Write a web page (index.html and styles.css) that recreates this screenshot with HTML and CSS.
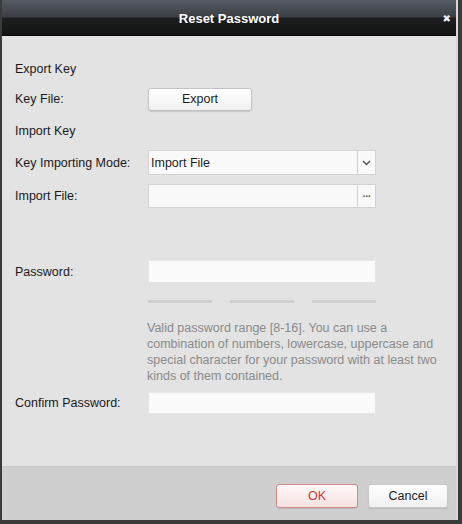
FILE: index.html
```html
<!DOCTYPE html>
<html>
<head>
<meta charset="utf-8">
<link rel="stylesheet" href="styles.css">
</head>
<body>
<div class="frame">
  <div class="dialog">
    <div class="titlebar">
      <span class="title">Reset Password</span>
      <span class="close">&#x2716;</span>
    </div>
    <div class="content">
      <div class="row r-export-key"><span class="label">Export Key</span></div>
      <div class="row r-key-file">
        <span class="label">Key File:</span>
        <button class="btn export">Export</button>
      </div>
      <div class="row r-import-key"><span class="label">Import Key</span></div>
      <div class="row r-mode">
        <span class="label">Key Importing Mode:</span>
        <div class="field select">
          <span class="value">Import File</span>
          <span class="side">
            <svg width="9" height="6" viewBox="0 0 9 6"><path d="M1 1 L4.5 4.5 L8 1" fill="none" stroke="#555" stroke-width="1.5"/></svg>
          </span>
        </div>
      </div>
      <div class="row r-file">
        <span class="label">Import File:</span>
        <div class="field file">
          <span class="value"></span>
          <span class="side dots">&middot;&middot;&middot;</span>
        </div>
      </div>
      <div class="row r-password">
        <span class="label">Password:</span>
        <div class="field input"></div>
      </div>
      <div class="row r-bars">
        <span class="label"></span>
        <div class="bars"><span class="bar"></span><span class="bar"></span><span class="bar"></span></div>
      </div>
      <div class="row r-help">
        <span class="label"></span>
        <p class="help">Valid password range [8-16]. You can use a combination of numbers, lowercase, uppercase and special character for your password with at least two kinds of them contained.</p>
      </div>
      <div class="row r-confirm">
        <span class="label">Confirm Password:</span>
        <div class="field input"></div>
      </div>
    </div>
    <div class="footer">
      <button class="btn ok">OK</button>
      <button class="btn cancel">Cancel</button>
    </div>
  </div>
</div>
</body>
</html>
```
FILE: styles.css
```css
* { box-sizing: border-box; }
html, body { margin: 0; padding: 0; }
body {
  width: 462px;
  height: 524px;
  font-family: "Liberation Sans", Arial, sans-serif;
  font-size: 12.5px;
  color: #222;
  background: #fff;
}
.frame {
  width: 462px;
  height: 524px;
  background: #3a3a3a;
  padding: 0 4px 4px 2px;
}
.dialog {
  width: 456px;
  height: 520px;
  display: flex;
  flex-direction: column;
  border-right: 2px solid #d6d6d6;
  background: #e3e3e3;
}
.titlebar {
  height: 36px;
  flex: none;
  display: flex;
  align-items: center;
  justify-content: center;
  position: relative;
  background: linear-gradient(#565b63 0%, #3b3f45 48%, #1d1e20 52%, #141414 100%);
  border-bottom: 1px solid #0d0d0d;
}
.title {
  color: #fff;
  font-weight: bold;
  font-size: 13px;
  margin-top: 1px;
}
.close {
  position: absolute;
  right: 5px;
  top: 13px;
  color: #eee;
  font-size: 10px;
  font-family: "DejaVu Sans", sans-serif;
}
.content {
  flex: 1;
  padding: 21px 0 0 13px;
  display: flex;
  flex-direction: column;
}
.row {
  display: flex;
  align-items: center;
}
.label {
  width: 133px;
  flex: none;
  color: #1a1a1a;
}
.r-export-key { height: 24px; }
.r-key-file { height: 24px; margin-top: 6px; }
.r-import-key { height: 24px; margin-top: 8px; }
.r-mode { height: 25px; margin-top: 7px; }
.r-file { height: 24px; margin-top: 9px; }
.r-password { height: 23px; margin-top: 52px; }
.r-bars { height: 3px; margin-top: 17px; }
.r-help { margin-top: 17px; align-items: flex-start; }
.r-confirm { height: 22px; margin-top: 8px; }

.btn {
  font-family: "Liberation Sans", Arial, sans-serif;
  font-size: 12.5px;
  border-radius: 3px;
  padding: 0;
  cursor: default;
}
.export {
  width: 104px;
  height: 23px;
  border: 1px solid #c2c2c2;
  background: linear-gradient(#ffffff, #f1f1f1);
  color: #1e1e1e;
  box-shadow: 0 1px 1px rgba(0,0,0,0.12);
}
.field {
  width: 228px;
  height: 100%;
  background: #f9f9f9;
  border: 1px solid #d3d3d3;
  display: flex;
  align-items: stretch;
}
.field .value {
  flex: 1;
  display: flex;
  align-items: center;
  padding-left: 2px;
  color: #1e1e1e;
}
.field .side {
  width: 18px;
  border-left: 1px solid #cfcfcf;
  display: flex;
  align-items: center;
  justify-content: center;
}
.dots {
  color: #666;
  font-size: 11px;
  letter-spacing: -1px;
  font-weight: bold;
}
.input {
  border-color: #e6e6e6;
  background: #fafafa;
}
.bars {
  width: 228px;
  display: flex;
  justify-content: space-between;
}
.bar {
  width: 64px;
  height: 3px;
  background: #cfcfcf;
}
.help {
  margin: 0;
  width: 305px;
  color: #8a8a8a;
  line-height: 16px;
  margin-left: -1px;
}
.footer {
  height: 54px;
  flex: none;
  background: #cfcfcf;
  display: flex;
  justify-content: flex-end;
  align-items: flex-start;
  padding: 17px 8px 0 0;
  gap: 10px;
  border-top: 1px solid #cacaca;
}
.ok {
  width: 82px;
  height: 24px;
  border: 1px solid #d08a8a;
  background: linear-gradient(#fff8f8, #f6e1e1);
  color: #c23a3a;
  box-shadow: 0 1px 1px rgba(0,0,0,0.1);
}
.cancel {
  width: 80px;
  height: 24px;
  border: 1px solid #c9c9c9;
  background: linear-gradient(#ffffff, #f1f1f1);
  color: #1e1e1e;
  box-shadow: 0 1px 1px rgba(0,0,0,0.1);
}
```
